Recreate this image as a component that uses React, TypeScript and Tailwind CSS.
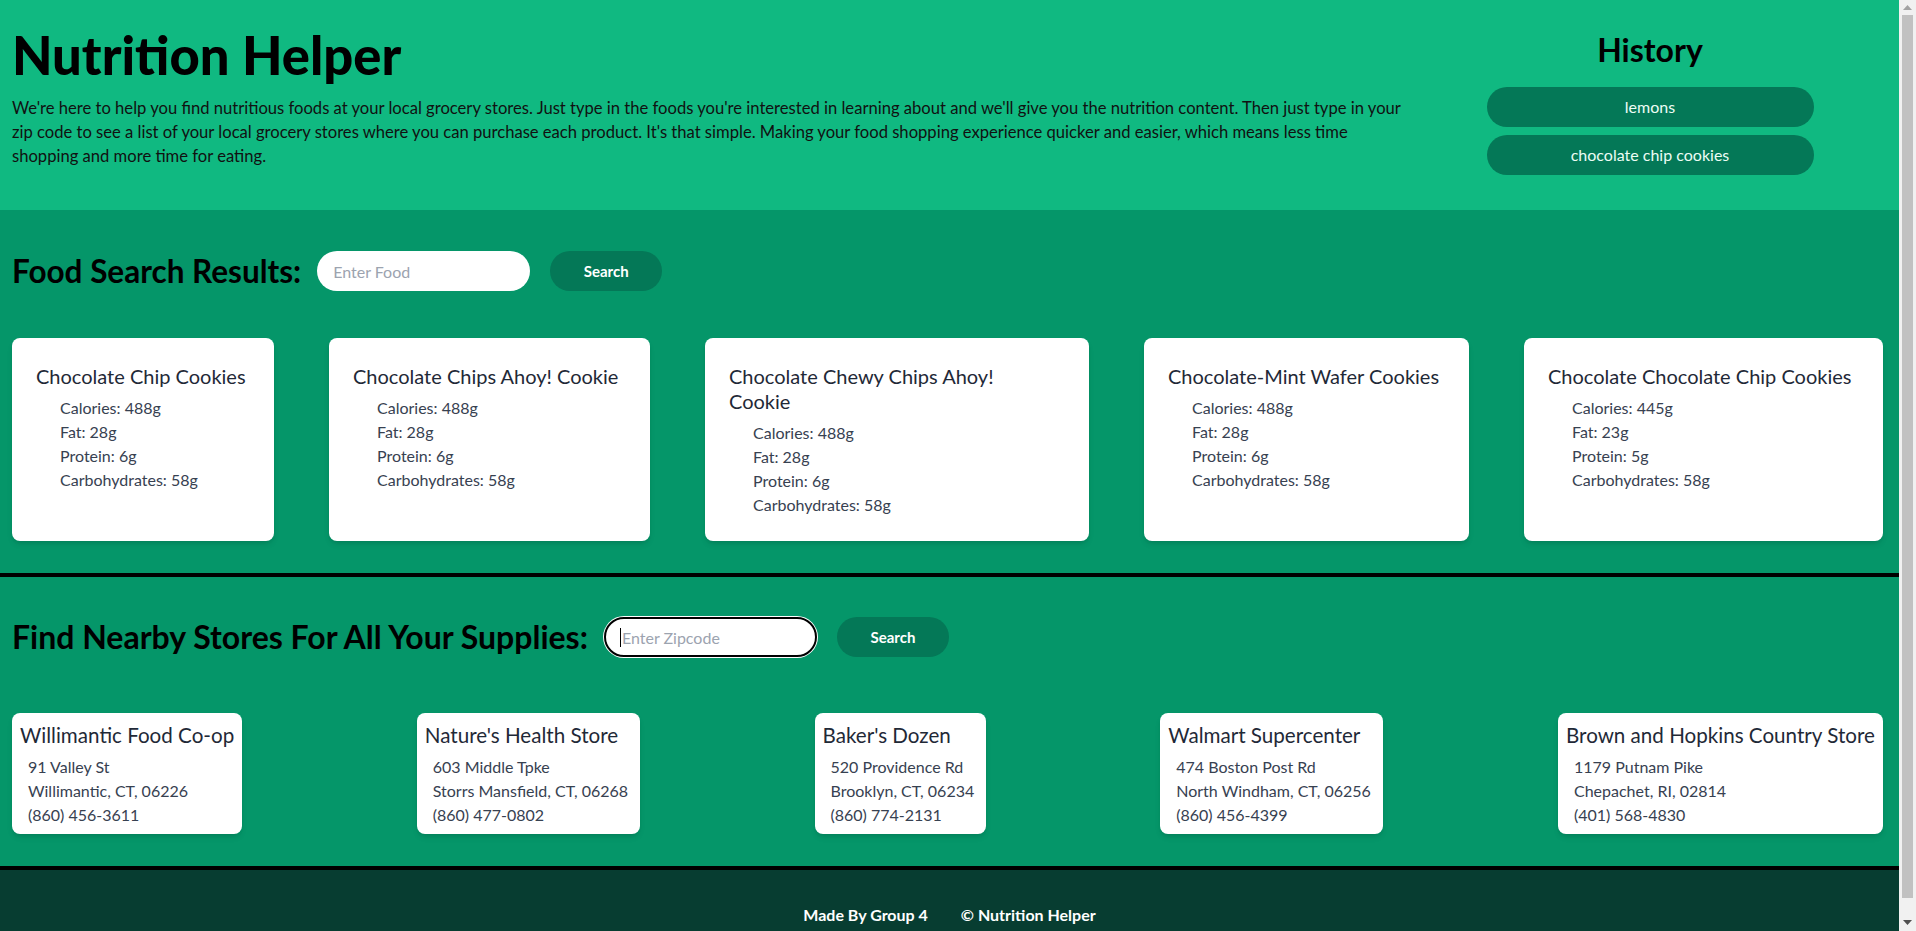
import React from "react";

const foods = [
  { name: "Chocolate Chip Cookies", cal: "488g", fat: "28g", protein: "6g", carbs: "58g", w: "w-[262px]", tw: "" },
  { name: "Chocolate Chips Ahoy! Cookie", cal: "488g", fat: "28g", protein: "6g", carbs: "58g", w: "w-[321px]", tw: "" },
  { name: "Chocolate Chewy Chips Ahoy! Cookie", cal: "488g", fat: "28g", protein: "6g", carbs: "58g", w: "w-[384px]", tw: "max-w-[300px]" },
  { name: "Chocolate-Mint Wafer Cookies", cal: "488g", fat: "28g", protein: "6g", carbs: "58g", w: "w-[325px]", tw: "" },
  { name: "Chocolate Chocolate Chip Cookies", cal: "445g", fat: "23g", protein: "5g", carbs: "58g", w: "w-[359px]", tw: "" },
];

const stores = [
  { name: "Willimantic Food Co-op", street: "91 Valley St", city: "Willimantic, CT, 06226", phone: "(860) 456-3611", w: "w-[230px]" },
  { name: "Nature's Health Store", street: "603 Middle Tpke", city: "Storrs Mansfield, CT, 06268", phone: "(860) 477-0802", w: "w-[223px]" },
  { name: "Baker's Dozen", street: "520 Providence Rd", city: "Brooklyn, CT, 06234", phone: "(860) 774-2131", w: "w-[171px]" },
  { name: "Walmart Supercenter", street: "474 Boston Post Rd", city: "North Windham, CT, 06256", phone: "(860) 456-4399", w: "w-[223px]" },
  { name: "Brown and Hopkins Country Store", street: "1179 Putnam Pike", city: "Chepachet, RI, 02814", phone: "(401) 568-4830", w: "w-[325px]" },
];

function Scrollbar() {
  return (
    <div className="w-[17px] shrink-0 bg-[#f1f1f1] flex flex-col items-center">
      <div className="h-[15px] w-full flex items-center justify-center">
        <svg width="9" height="5" viewBox="0 0 9 5">
          <path d="M0 5 L4.5 0 L9 5 Z" fill="#a3a3a3" />
        </svg>
      </div>
      <div className="h-[883px] w-[11px] bg-[#c1c1c1]" />
      <div className="flex-1" />
      <div className="h-[17px] w-full flex items-center justify-center">
        <svg width="9" height="5" viewBox="0 0 9 5">
          <path d="M0 0 L9 0 L4.5 5 Z" fill="#505050" />
        </svg>
      </div>
    </div>
  );
}

export default function App() {
  return (
    <div className="flex h-screen overflow-hidden font-['Lato',sans-serif] text-black">
      <div className="flex-1 min-w-0 overflow-hidden">
        {/* Header */}
        <header className="bg-[#10b981] flex">
          <div className="flex-1 min-w-0 pl-3 pr-[20px] pt-[26px] pb-[42px]">
            <h1 className="text-[52.5px] leading-[58px] font-black">Nutrition Helper</h1>
            <p className="mt-[12px] text-[16.6px] leading-6 text-[#111]">
              We're here to help you find nutritious foods at your local grocery stores. Just type in the foods you're interested in learning about and we'll give you the nutrition content. Then just type in your zip code to see a list of your local grocery stores where you can purchase each product. It's that simple. Making your food shopping experience quicker and easier, which means less time shopping and more time for eating.
            </p>
          </div>
          <div className="w-[436px] mr-[31px] shrink-0 flex flex-col items-center pt-[30px]">
            <h2 className="text-[32px] leading-[40px] font-bold">History</h2>
            <div className="mt-[17px] flex flex-col gap-2">
              <button className="w-[327px] h-[40px] rounded-full bg-[#047857] text-[#ecfdf5] text-[16px]">lemons</button>
              <button className="w-[327px] h-[40px] rounded-full bg-[#047857] text-[#ecfdf5] text-[16px]">chocolate chip cookies</button>
            </div>
          </div>
        </header>

        {/* Food search */}
        <section className="bg-[#059669] pt-[41px] pb-[32px]">
          <div className="flex items-center pl-3">
            <h2 className="text-[31.5px] leading-[40px] font-bold">Food Search Results:</h2>
            <input
              className="ml-[16px] w-[213px] h-[40px] rounded-full bg-white px-4 text-[16px] outline-none placeholder:text-[#9ca3af]"
              placeholder="Enter Food"
            />
            <button className="ml-[20px] w-[112px] h-[40px] rounded-full bg-[#047857] text-white font-bold text-[15px]">Search</button>
          </div>
          <div className="mt-[47px] flex justify-between items-stretch pl-3 pr-4">
            {foods.map((f) => (
              <div key={f.name} className={`${f.w} bg-white rounded-lg shadow-md pt-[26px] px-6 pb-6`}>
                <h3 className={`${f.tw} text-[20px] leading-[25px] text-[#1f2937]`}>{f.name}</h3>
                <ul className="mt-[7px] pl-6 text-[16px] leading-6 text-[#374151]">
                  <li>Calories: {f.cal}</li>
                  <li>Fat: {f.fat}</li>
                  <li>Protein: {f.protein}</li>
                  <li>Carbohydrates: {f.carbs}</li>
                </ul>
              </div>
            ))}
          </div>
        </section>

        {/* Stores */}
        <section className="bg-[#059669] border-t-4 border-black pt-[40px] pb-[32px]">
          <div className="flex items-center pl-3">
            <h2 className="text-[32px] leading-[40px] font-bold">Find Nearby Stores For All Your Supplies:</h2>
            <div className="relative ml-[16px]">
              <input
                className="w-[213px] h-[40px] rounded-full bg-white px-4 text-[16px] outline-none border-2 border-black shadow-[0_0_0_1px_#ffffff] placeholder:text-[#9ca3af]"
                placeholder="Enter Zipcode"
              />
              <span className="absolute left-[16px] top-[11px] w-px h-[19px] bg-black" />
            </div>
            <button className="ml-[20px] w-[112px] h-[40px] rounded-full bg-[#047857] text-white font-bold text-[15px]">Search</button>
          </div>
          <div className="mt-[56px] flex justify-between items-start pl-3 pr-4">
            {stores.map((s) => (
              <div key={s.name} className={`${s.w} bg-white rounded-lg shadow-md px-2 pt-[10px] pb-[7px] whitespace-nowrap`}>
                <h3 className="text-[20.6px] leading-[25px] text-[#1f2937]">{s.name}</h3>
                <div className="mt-[7px] pl-2 text-[16px] leading-6 text-[#374151]">
                  <p>{s.street}</p>
                  <p>{s.city}</p>
                  <p>{s.phone}</p>
                </div>
              </div>
            ))}
          </div>
        </section>

        {/* Footer */}
        <footer className="bg-[#073d31] border-t-4 border-black pt-[35px] pb-[35px] flex justify-center gap-[33px] text-white font-bold text-[16px] leading-5">
          <span>Made By Group 4</span>
          <span>© Nutrition Helper</span>
        </footer>
      </div>
      <Scrollbar />
    </div>
  );
}
